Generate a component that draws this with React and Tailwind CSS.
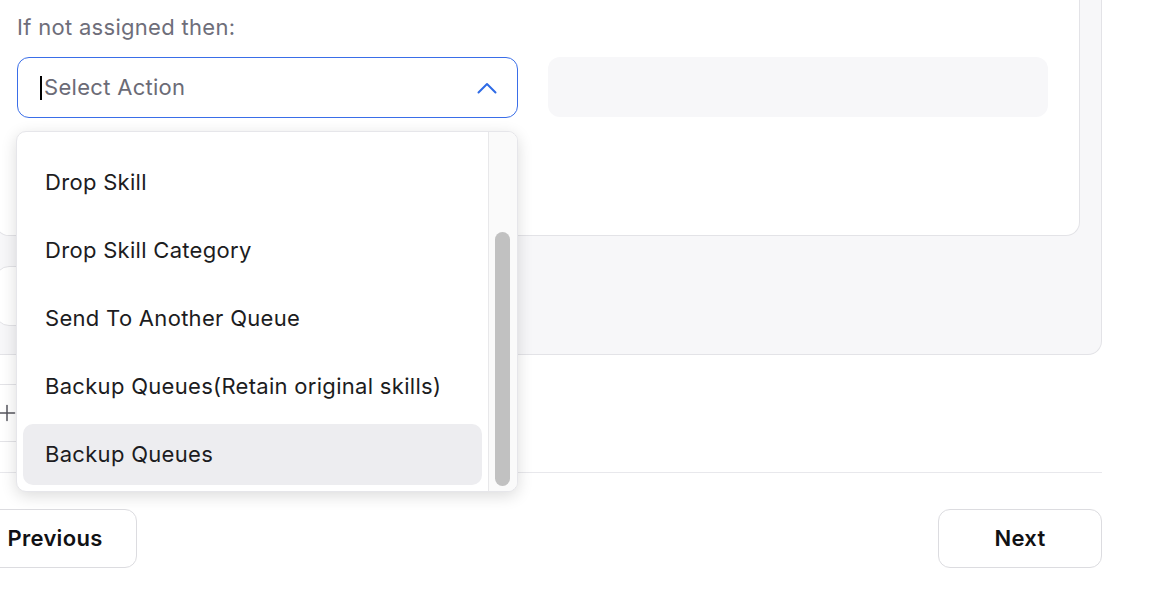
import React from 'react'
import { Plus } from 'lucide-react'

const options = [
  'Drop Skill',
  'Drop Skill Category',
  'Send To Another Queue',
  'Backup Queues(Retain original skills)',
  'Backup Queues'
]

const ActionDropdown = () => (
  <div className="absolute left-[-1px] top-[calc(100%+13px)] z-10 flex h-[361px] w-[502px] overflow-hidden rounded-[10px] border border-[#e6e6ea] bg-white shadow-[0_4px_16px_rgba(0,0,0,0.14)]">
    <div className="flex-1 space-y-[7px] px-[6px] pt-[20px]">
      {options.map((opt, i) => (
        <div
          key={opt}
          className={`flex h-[61px] items-center rounded-[10px] pl-[22px] text-[22px] tracking-[0.3px] text-[#1c1c21] ${i === options.length - 1 ? 'bg-[#ededf0]' : ''}`}
        >
          {opt}
        </div>
      ))}
    </div>
    <div className="w-[29px] border-l border-[#e8e8ea] bg-[#fafafa] pl-[6px] pt-[100px]">
      <div className="h-[254px] w-[15px] rounded-full bg-[#c1c1c1]" />
    </div>
  </div>
)

export default function App() {
  return (
    <div className="h-[590px] w-[1154px] overflow-hidden bg-white font-['Inter','Liberation_Sans',sans-serif]">
      <div className="ml-[-27px] w-[1129px]">
        {/* rule panel */}
        <div className="rounded-b-[14px] border-x border-b border-[#e3e3e7] bg-[#f7f7f9] px-[21px] pb-[28px]">
          <div className="rounded-b-[14px] border-x border-b border-[#e3e3e7] bg-white pb-[117px] pl-[21px] pr-[31px] pt-[13px]">
            <div className="text-[22px] leading-[28px] tracking-[0.3px] text-[#6e6e7a]">If not assigned then:</div>
            <div className="mt-[16px] grid grid-cols-2 gap-[30px]">
              <div className="relative">
                <div className="flex h-[61px] items-center rounded-[12px] border border-[#3a6ee8] bg-white pl-[22px] pr-[20px]">
                  <span className="mr-[2px] h-[24px] w-[2px] bg-black" />
                  <span className="flex-1 text-[22px] tracking-[0.3px] text-[#6b6b76]">Select Action</span>
                  <svg width="20" height="12" viewBox="0 0 20 12" fill="none">
                    <polyline points="1.5,10.5 10,2 18.5,10.5" stroke="#2f6be6" strokeWidth="2" strokeLinecap="round" strokeLinejoin="round" />
                  </svg>
                </div>
                <ActionDropdown />
              </div>
              <div className="h-[60px] rounded-[12px] bg-[#f7f7f9]" />
            </div>
          </div>
          <div className="mt-[30px] h-[60px] w-[300px] rounded-[14px] border border-[#e3e3e7] bg-white" />
        </div>

        {/* add row */}
        <div className="mt-[29px] flex h-[58px] w-[320px] items-center rounded-[12px] border border-[#e3e3e7] pl-[20px] text-[#55555e]">
          <Plus size={26} strokeWidth={1.5} absoluteStrokeWidth />
        </div>

        <div className="mt-[30px] h-px bg-[#e8e8ec]" />

        {/* footer */}
        <div className="mt-[36px] flex justify-between">
          <button className="h-[59px] w-[164px] rounded-[12px] border border-[#dcdce0] bg-white text-[22px] font-semibold tracking-[0.3px] text-[#111114]">
            Previous
          </button>
          <button className="h-[59px] w-[164px] rounded-[12px] border border-[#dcdce0] bg-white text-[22px] font-semibold tracking-[0.3px] text-[#111114]">
            Next
          </button>
        </div>
      </div>
    </div>
  )
}
